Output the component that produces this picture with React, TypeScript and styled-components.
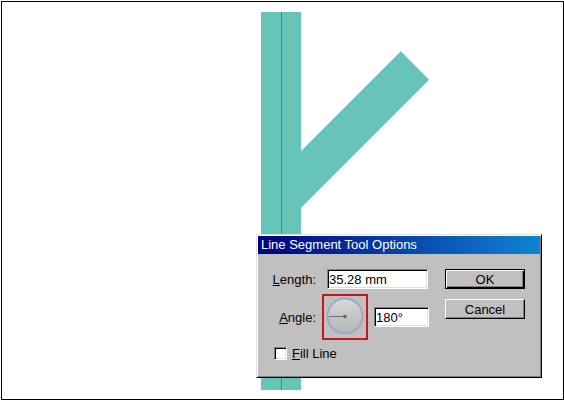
import styled, { createGlobalStyle } from 'styled-components';

const GlobalStyle = createGlobalStyle`
  html, body {
    margin: 0;
    padding: 0;
    background: #fff;
  }
  body {
    font-family: 'Liberation Sans', Arial, sans-serif;
  }
`;

const Frame = styled.div`
  position: relative;
  box-sizing: border-box;
  width: 563px;
  height: 399px;
  margin: 1px 0 0 1px;
  border: 1px solid #000;
  background: #fff;
  overflow: hidden;
`;

const Artboard = styled.svg`
  display: block;
`;

const Dialog = styled.div`
  position: absolute;
  left: 254px;
  top: 232px;
  box-sizing: border-box;
  width: 286px;
  height: 144px;
  padding: 1px;
  background: #c0c0c0;
  border: 1px solid;
  border-color: #dfdfdf #000 #000 #dfdfdf;
  box-shadow: inset 1px 1px #fff, inset -1px -1px #808080;
  font-family: 'Liberation Sans', Arial, sans-serif;
  font-size: 13px;
  color: #000;
`;

const TitleBar = styled.div`
  height: 18px;
  line-height: 18px;
  padding-left: 3px;
  background: linear-gradient(to right, #000080, #1084d0);
  color: #fff;
  font-size: 13px;
  white-space: nowrap;
`;

const Body = styled.div`
  display: flex;
  align-items: flex-start;
  padding-top: 15px;
`;

const Form = styled.div`
  display: flex;
  flex-direction: column;
`;

const Row = styled.div<{ $gap: number; $top?: number }>`
  display: flex;
  align-items: center;
  gap: ${(p) => p.$gap}px;
  margin-top: ${(p) => p.$top || 0}px;
`;

const Label = styled.label`
  width: 58px;
  text-align: right;
  white-space: nowrap;
  u {
    text-decoration: underline;
  }
`;

const Field = styled.input<{ $w: number }>`
  box-sizing: border-box;
  width: ${(p) => p.$w}px;
  height: 20px;
  margin: 0;
  padding: 0 1px;
  font-family: 'Liberation Sans', Arial, sans-serif;
  font-size: 13px;
  color: #000;
  background: #fff;
  border: 1px solid;
  border-color: #808080 #fff #fff #808080;
  box-shadow: inset 1px 1px #000, inset -1px -1px #dfdfdf;
  outline: none;
`;

const DialBox = styled.div`
  box-sizing: border-box;
  width: 46px;
  height: 46px;
  border: 2px solid #c41818;
  display: flex;
  align-items: center;
  justify-content: center;
`;

const CheckRow = styled.div`
  display: flex;
  align-items: center;
  gap: 5px;
  margin-top: 6px;
  padding-left: 16px;
  white-space: nowrap;
`;

const CheckBox = styled.span`
  box-sizing: border-box;
  width: 13px;
  height: 13px;
  background: #fff;
  border: 1px solid;
  border-color: #808080 #fff #fff #808080;
  box-shadow: inset 1px 1px #000, inset -1px -1px #dfdfdf;
`;

const Buttons = styled.div`
  display: flex;
  flex-direction: column;
  gap: 10px;
  margin-left: 16px;
`;

const Button = styled.button<{ $default?: boolean }>`
  box-sizing: border-box;
  width: 80px;
  height: 20px;
  margin: 0;
  padding: 0;
  font-family: 'Liberation Sans', Arial, sans-serif;
  font-size: 13px;
  color: #000;
  background: #c0c0c0;
  border: 1px solid;
  border-color: ${(p) => (p.$default ? '#000' : '#fff #000 #000 #fff')};
  box-shadow: ${(p) =>
    p.$default
      ? 'inset 1px 1px #fff, inset -1px -1px #000, inset -2px -2px #808080'
      : 'inset -1px -1px #808080'};
`;

const Dial = () => (
  <svg width="42" height="42" viewBox="0 0 42 42">
    <defs>
      <linearGradient id="dialFill" x1="0" y1="0" x2="0" y2="1">
        <stop offset="0" stopColor="#d8d8d8" />
        <stop offset="1" stopColor="#b4b4b4" />
      </linearGradient>
    </defs>
    <circle cx="21" cy="20" r="17.5" fill="url(#dialFill)" stroke="#9ea6c6" strokeWidth="2" />
    <line x1="5" y1="20.5" x2="21" y2="20.5" stroke="#707070" strokeWidth="1" />
    <rect x="19.5" y="19" width="3" height="3" fill="#666" />
  </svg>
);

export default function App() {
  return (
    <>
      <GlobalStyle />
      <Frame>
        <Artboard width="561" height="397" viewBox="0 0 561 397">
          <line x1="279" y1="197.5" x2="413" y2="63.5" stroke="#66c4b8" strokeWidth="40" />
          <rect x="259" y="10" width="40" height="378" fill="#66c4b8" />
          <line x1="279.5" y1="10" x2="279.5" y2="388" stroke="#4c72e0" strokeWidth="1" />
        </Artboard>
        <Dialog>
          <TitleBar>Line Segment Tool Options</TitleBar>
          <Body>
            <Form>
              <Row $gap={11}>
                <Label>
                  <u>L</u>ength:
                </Label>
                <Field $w={101} readOnly value="35.28 mm" />
              </Row>
              <Row $gap={6} $top={5}>
                <Label>
                  <u>A</u>ngle:
                </Label>
                <DialBox>
                  <Dial />
                </DialBox>
                <Field $w={55} readOnly value="180°" />
              </Row>
              <CheckRow>
                <CheckBox />
                <span>
                  <u>F</u>ill Line
                </span>
              </CheckRow>
            </Form>
            <Buttons>
              <Button $default>OK</Button>
              <Button>Cancel</Button>
            </Buttons>
          </Body>
        </Dialog>
      </Frame>
    </>
  );
}
